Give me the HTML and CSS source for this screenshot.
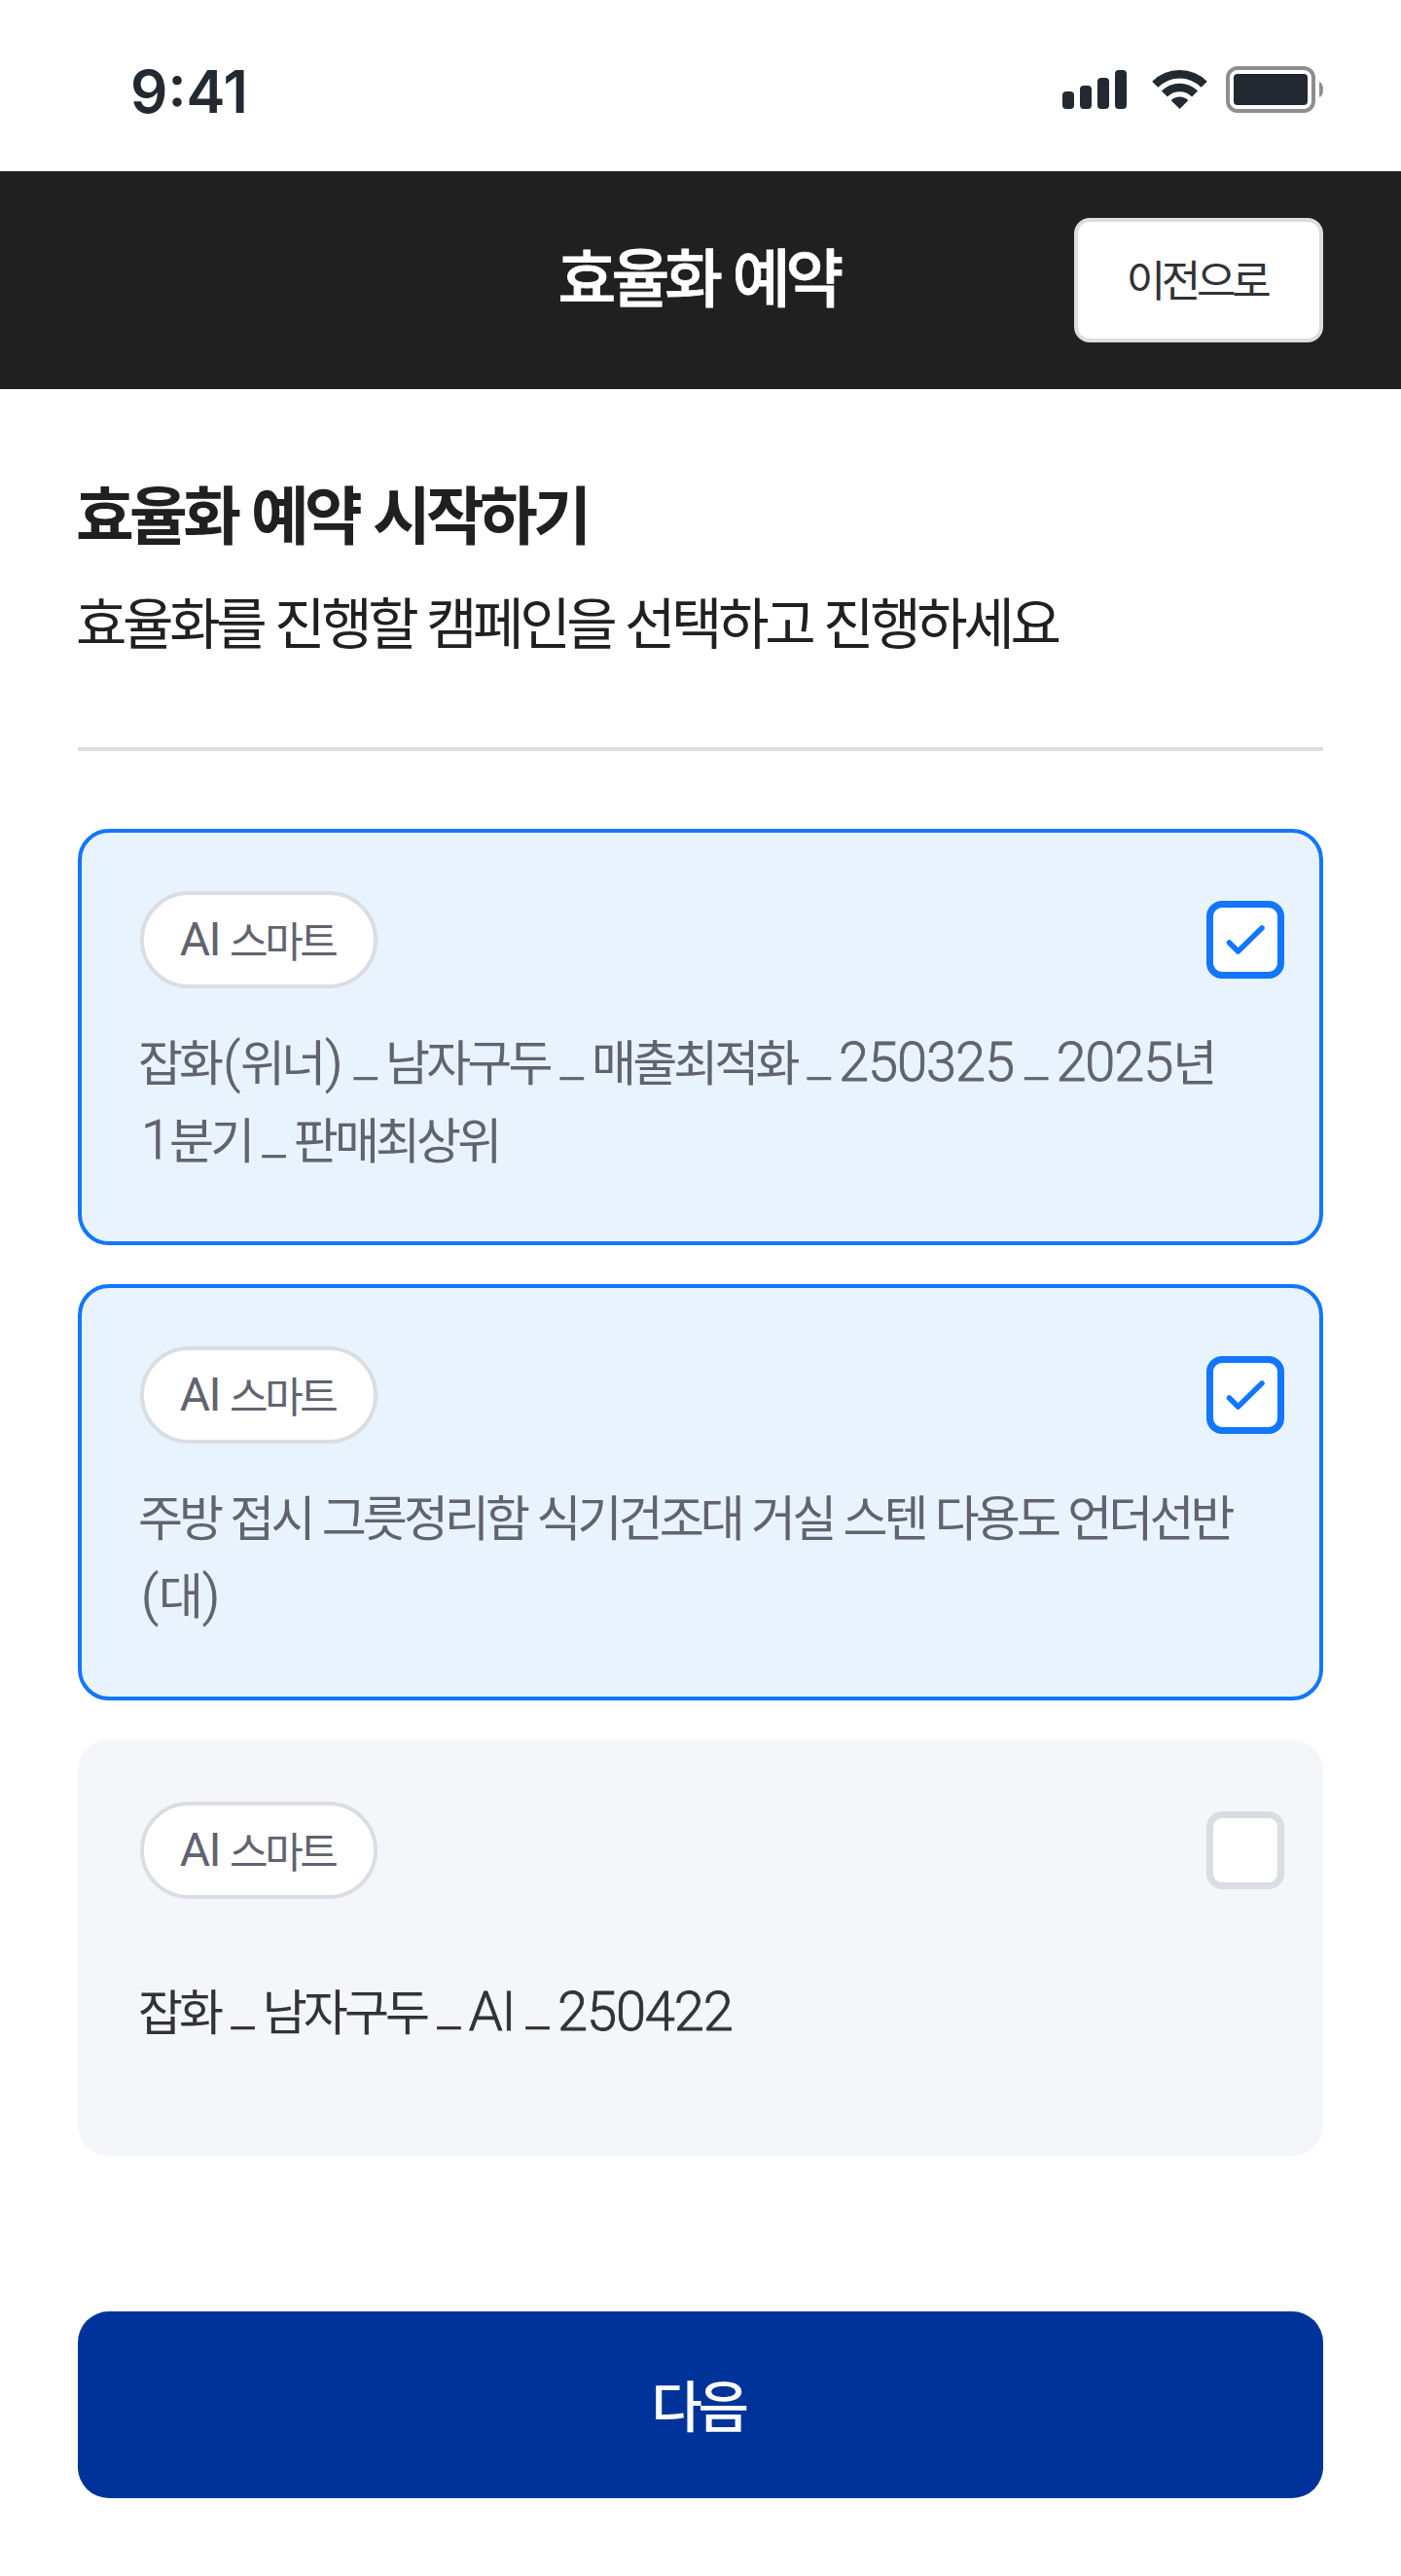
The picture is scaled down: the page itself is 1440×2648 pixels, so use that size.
FILE: index.html
```html
<!DOCTYPE html>
<html lang="ko">
<head>
    <meta charset="UTF-8">
    <title>효율화 예약</title>
    <link rel="stylesheet" href="styles.css">
</head>
<body>

<div class="status-bar">
    <span class="time">9:41</span>
    <svg class="status-icons" width="268" height="48" viewBox="0 0 268 48">
        <!-- signal -->
        <g fill="#222930">
            <rect x="0" y="26" width="12" height="18" rx="4"/>
            <rect x="18" y="20" width="12" height="24" rx="4"/>
            <rect x="36" y="12" width="12" height="32" rx="4"/>
            <rect x="54" y="4" width="12" height="40" rx="4"/>
        </g>
        <!-- wifi -->
        <g fill="#222930" transform="translate(92 4)">
            <path d="M.2 11.7a40 40 0 0 1 56.6 0l-6.1 6.1a31.4 31.4 0 0 0-44.4 0z"/>
            <path d="M9.9 21.4a26.3 26.3 0 0 1 37.2 0l-6 6a17.8 17.8 0 0 0-25.2 0z"/>
            <path d="M19.7 31.2a12.4 12.4 0 0 1 17.6 0L28.5 40z"/>
        </g>
        <!-- battery -->
        <rect x="170" y="2" width="88" height="44" rx="10" fill="none" stroke="#8e8d92" stroke-width="4"/>
        <rect x="176" y="8" width="76" height="32" rx="4" fill="#222930"/>
        <path d="M264 16c2.600 1 4 4 4 8s-1.400 7-4 8z" fill="#8e8d92"/>
    </svg>
</div>

<header class="header">
    <h1 class="header-title">효율화 예약</h1>
    <button class="btn-back">이전으로</button>
</header>

<main class="content">
    <h2 class="title">효율화 예약 시작하기</h2>
    <p class="subtitle">효율화를 진행할 캠페인을 선택하고 진행하세요</p>

    <hr class="divider">

    <div class="campaign-list">
        <div class="card selected">
            <div class="card-top">
                <span class="badge"><span class="en">AI</span> 스마트</span>
                <span class="checkbox">
                    <svg width="80" height="80" viewBox="0 0 80 80"><path d="M23.500 43l9 9 24.500-24" fill="none" stroke="#1276ff" stroke-width="5.500" stroke-linecap="round" stroke-linejoin="round"/></svg>
                </span>
            </div>
            <p class="card-name"><span>잡화<span class="en paren">(</span>위너<span class="en paren">)</span> <span class="bar">_</span> 남자구두 <span class="bar">_</span> 매출최적화 <span class="bar">_</span> <span class="en">250325</span> <span class="bar">_</span> <span class="en">2025</span>년<br><span class="en first">1</span>분기 <span class="bar">_</span> 판매최상위</span></p>
        </div>

        <div class="card selected">
            <div class="card-top">
                <span class="badge"><span class="en">AI</span> 스마트</span>
                <span class="checkbox">
                    <svg width="80" height="80" viewBox="0 0 80 80"><path d="M23.500 43l9 9 24.500-24" fill="none" stroke="#1276ff" stroke-width="5.500" stroke-linecap="round" stroke-linejoin="round"/></svg>
                </span>
            </div>
            <p class="card-name"><span>주방 접시 그릇정리함 식기건조대 거실 스텐 다용도 언더선반<br><span class="en paren">(</span>대<span class="en paren">)</span></span></p>
        </div>

        <div class="card">
            <div class="card-top">
                <span class="badge"><span class="en">AI</span> 스마트</span>
                <span class="checkbox"></span>
            </div>
            <p class="card-name"><span>잡화 <span class="bar">_</span> 남자구두 <span class="bar">_</span> <span class="en">AI</span> <span class="bar">_</span> <span class="en">250422</span></span></p>
        </div>
    </div>

    <button class="btn-next">다음</button>
</main>

</body>
</html>
```
FILE: styles.css
```css
* {
    box-sizing: border-box;
    margin: 0;
    padding: 0;
}
body {
    font-family: Inter, "Noto Sans CJK KR", sans-serif;
    background-color: #fff;
    color: #202020;
}
button {
    font-family: inherit;
}

/* status bar */
.status-bar {
    display: flex;
    justify-content: space-between;
    align-items: center;
    height: 176px;
    padding: 8px 80px 0 134px;
}
.time {
    padding-top: 4px;
    font-size: 60px;
    font-weight: 600;
    line-height: 72px;
    color: #222930;
}

/* header */
.header {
    display: grid;
    grid-template-columns: 1fr auto 1fr;
    align-items: center;
    height: 224px;
    padding: 0 80px;
    background-color: #202020;
}
.header-title {
    grid-column: 2;
    padding: 0 4px 2px 0;
    font-size: 65px;
    font-weight: 500;
    line-height: 88px;
    letter-spacing: -4.9px;
    word-spacing: 2px;
    -webkit-text-stroke: 0.8px #fff;
    color: #fff;
}
.btn-back {
    justify-self: end;
    width: 256px;
    height: 128px;
    padding: 0 4px 5px 0;
    border: 4px solid #dadde2;
    border-radius: 16px;
    background-color: #fff;
    font-size: 44px;
    letter-spacing: -4.3px;
    color: #323238;
}

/* content */
.content {
    padding: 87px 80px 80px;
}
.title {
    margin-left: -2px;
    font-size: 65px;
    font-weight: 700;
    line-height: 88px;
    letter-spacing: -4.700px;
    word-spacing: 4px;
}
.subtitle {
    margin: 27px 0 0 -2px;
    font-size: 57px;
    line-height: 80px;
    letter-spacing: -4.350px;
}
.divider {
    height: 4px;
    margin: 86px 0 80px;
    border: none;
    background-color: #dadde2;
}

/* campaign cards */
.campaign-list {
    display: flex;
    flex-direction: column;
    gap: 40px;
}
.card {
    height: 428px;
    padding: 64px 40px 0 64px;
    border-radius: 32px;
    background-color: #f4f6fa;
}
.card.selected {
    padding: 60px 36px 0 60px;
    border: 4px solid #1276ff;
    background-color: #e8f3fe;
}
.card-top {
    display: flex;
    justify-content: space-between;
    align-items: center;
}
.badge {
    display: flex;
    justify-content: center;
    align-items: center;
    gap: 10px;
    width: 244px;
    height: 100px;
    padding: 0 3px 2px 0;
    border: 4px solid #dadde2;
    border-radius: 50px;
    background-color: #fff;
    font-size: 43px;
    letter-spacing: -3.5px;
    color: #61636f;
}
.en {
    font-family: Roboto, sans-serif;
}
.badge .en {
    font-size: 48px;
    letter-spacing: -1.500px;
}
.checkbox {
    display: flex;
    width: 80px;
    height: 80px;
    border: 7px solid #dadde2;
    border-radius: 16px;
    background-color: #fff;
}
.selected .checkbox {
    border-color: #1276ff;
}
.checkbox svg {
    flex: none;
    margin: -7px;
}
.card-name {
    display: flex;
    align-items: center;
    height: 160px;
    margin: 37px 0 0 -2px;
    font-size: 50px;
    line-height: 80px;
    letter-spacing: -3.9px;
    white-space: nowrap;
    color: #323238;
}
.selected .card-name {
    color: #61636f;
}
.card-name .en {
    font-size: 56px;
    font-weight: 300;
    line-height: 1;
    letter-spacing: -1.1px;
    -webkit-text-stroke: 0.8px currentColor;
}
.card-name .paren {
    margin-left: 3px;
    letter-spacing: 0;
}
.card-name .first {
    margin-left: 3px;
    letter-spacing: -2px;
}
.card-name .bar {
    margin-left: 1px;
    font-family: Roboto, sans-serif;
    font-size: 56px;
    font-weight: 300;
    line-height: 1;
    letter-spacing: -2px;
    vertical-align: 4px;
    -webkit-text-stroke: 0.6px currentColor;
}

.btn-next {
    display: block;
    width: 100%;
    height: 192px;
    margin-top: 160px;
    padding: 0 5px 5px 0;
    border: none;
    border-radius: 32px;
    background-color: #003399;
    font-size: 57px;
    font-weight: 500;
    letter-spacing: -4.4px;
    color: #fff;
}
```
